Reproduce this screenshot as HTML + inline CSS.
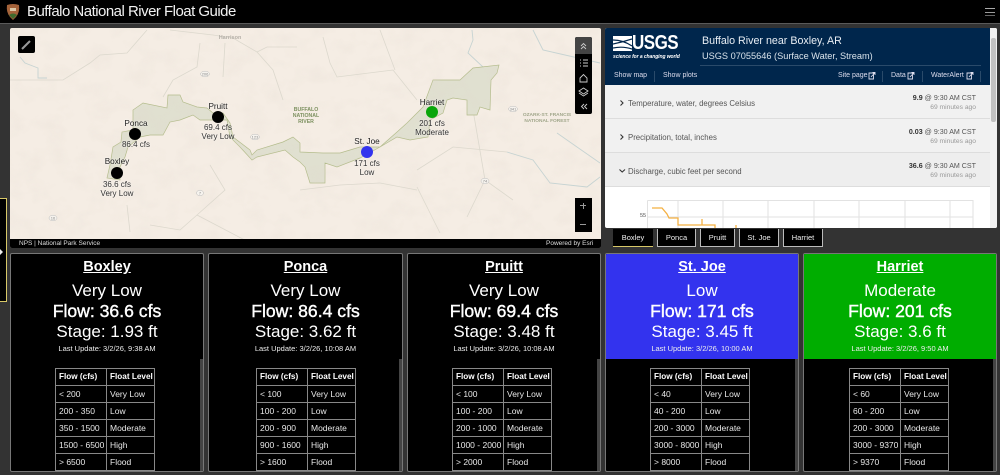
<!DOCTYPE html>
<html><head><meta charset="utf-8"><style>
html,body{margin:0;padding:0;width:1000px;height:475px;overflow:hidden;background:#333;font-family:"Liberation Sans",sans-serif;color:#fff}
body{filter:blur(.3px)}
div,span,a{position:absolute;white-space:nowrap}
.card{top:253px;height:219px;background:#000;border:1px solid #777;box-sizing:border-box;overflow:hidden;border-radius:2px}
.top{left:0;right:0;top:0;height:105px}
.c{left:0;width:100%;text-align:center}
.tt{top:4px;font-size:14.5px;font-weight:bold;text-decoration:underline;line-height:18px}
.l1{top:27px;font-size:17px;line-height:20px}
.l2{top:47px;font-size:17.6px;line-height:20px;-webkit-text-stroke:.4px #fff}
.l3{top:68px;font-size:17px;line-height:20px}
.l4{top:90px;font-size:7.5px;line-height:10px;color:#eee}
table{position:absolute;top:114px;border-collapse:collapse;font-size:8.5px;color:#e8e8e8;table-layout:fixed;width:100px}
td{border:1px solid #888;height:16px;padding:0 0 0 3px;box-sizing:border-box;overflow:hidden;white-space:nowrap;line-height:16px}
td.a{width:51px} tr:first-child td{font-weight:bold;color:#fff;font-size:8.2px}
.sb{right:0;top:105px;bottom:0;width:3px;background:#444}
.tab{top:229px;height:18px;background:#000;border:1px solid #bbb;border-top:0;box-sizing:border-box;font-size:7.5px;line-height:17px;text-align:center;color:#eee}
.mt{font-size:8px;color:#333;text-align:center;line-height:9px;text-shadow:0 0 2px #fff}
.nm{font-size:8.2px;color:#222}
.dot{border-radius:50%;width:12px;height:12px;background:#000}
.row{left:0;width:385px;height:34px;background:#f1f1f1;border-bottom:1px solid #ddd;box-sizing:border-box}
.rl{left:23px;top:14px;font-size:7.8px;color:#555;line-height:10px}
.rr{right:14px;top:9px;font-size:7.1px;color:#555;line-height:8.6px;text-align:right}
.rr span{position:static;color:#999;font-size:6.7px}
.lk{top:43px;font-size:7px;color:#dde;line-height:9px}
.sp{top:43px;width:1px;height:11px;background:#2a4a6a}
.shield{font-family:"Liberation Sans",sans-serif;font-size:4px;fill:#888;text-anchor:middle}
</style></head><body>
<div style="left:0;top:0;width:1000px;height:23px;background:#000"></div>
<div style="left:0;top:23px;width:1000px;height:1px;background:#5a5a5a"></div>
<svg style="position:absolute;left:6px;top:3px" width="14" height="17" viewBox="0 0 14 17"><path d="M1 2 Q7 0 13 2 Q14 9 10 14 L7 17 L4 14 Q0 9 1 2Z" fill="#a5633a"/><path d="M3 12 Q7 9 11 12 L7 16Z" fill="#3f6b2e"/><rect x="4" y="5" width="6" height="3" fill="#dcc9a8"/></svg>
<div style="left:27px;top:3px;font-size:15px;line-height:17px;color:#f2f2f2;letter-spacing:-.52px">Buffalo National River Float Guide</div>
<div style="left:985px;top:8px;width:10px;height:1px;background:#aaa"></div>
<div style="left:985px;top:12px;width:10px;height:1px;background:#999"></div>
<div style="left:985px;top:15px;width:10px;height:1px;background:#666"></div>

<div style="left:0;top:198px;width:7px;height:104px;background:#000;border:1px solid #d8c868;border-left:0;box-sizing:border-box"></div>
<div style="left:0;top:249px;width:0;height:0;border-left:3px solid #eee;border-top:3px solid transparent;border-bottom:3px solid transparent"></div>

<!-- map -->
<svg style="position:absolute;left:10px;top:28px;border-radius:2px" width="591" height="220" viewBox="10 28 591 220">
<defs><filter id="t" x="0" y="0" width="100%" height="100%"><feTurbulence type="fractalNoise" baseFrequency=".045 .06" numOctaves="3" seed="4"/><feColorMatrix values="0 0 0 0 .76  0 0 0 0 .69  0 0 0 0 .62  1.6 0 0 0 -.72"/></filter>
<clipPath id="pk"><path d="M107 178 L110 165 L113 147 L121 142 L122 132 L133 130 L133 110 L143 103 L167 108 L168 95 L180 95 L183 102 L197 107 L207 108 L213 113 L223 113 L230 123 L233 137 L250 150 L252 155 L257 150 L283 142 L293 137 L300 143 L300 152 L323 153 L340 153 L360 147 L380 147 L397 132 L407 123 L423 107 L433 80 L460 80 L473 68 L499 65 L497 73 L491 80 L490 110 L480 107 L477 115 L467 115 L467 100 L453 98 L447 100 L443 113 L430 120 L428 137 L410 140 L397 137 L380 147 L360 158 L337 167 L325 163 L325 183 L310 183 L305 167 L300 162 L293 157 L285 150 L257 157 L252 160 L240 147 L230 137 L227 120 L213 120 L200 120 L193 115 L180 120 L170 122 L163 135 L150 135 L140 137 L128 147 L125 157 L120 167 L120 180Z"/></clipPath></defs>
<rect x="10" y="28" width="591" height="220" fill="#f5ede4"/>
<rect x="10" y="28" width="591" height="220" filter="url(#t)" opacity=".28"/>
<g fill="none" stroke="#dcd8cd" stroke-width=".8">
<path d="M10 80 L43 80 L63 80 L90 63 L100 55 L127 53 L147 30"/><path d="M170 30 L213 35 L233 38 L257 52 L267 47 L297 47"/><path d="M200 43 L197 67 L173 80 L163 97"/><path d="M225 43 L223 77"/><path d="M257 52 L273 70 L283 100"/>
<path d="M323 37 L330 63 L337 77 L393 70 L417 100"/><path d="M380 30 L395 70"/><path d="M417 187 L440 233"/><path d="M380 183 L417 190"/><path d="M417 170 L453 147 L507 152"/><path d="M467 217 L485 180 L513 200"/><path d="M473 110 L485 180"/>
<path d="M127 205 L130 232"/><path d="M210 165 L225 190 L197 215 L260 248"/><path d="M150 225 L180 230 L197 215"/><path d="M300 190 L340 185 L380 183"/>
</g>
<g fill="none" stroke="#c6d3d2" stroke-width=".9">
<path d="M20 57 L25 63 L38 68 L38 78 L47 78"/><path d="M472 30 L473 40 L468 53 L483 67"/><path d="M507 152 L533 160 L550 183 L587 187 L600 177"/><path d="M557 133 L577 147 L600 163"/><path d="M533 30 L543 50 L600 63"/>
</g>
<path d="M107 178 L110 165 L113 147 L121 142 L122 132 L133 130 L133 110 L143 103 L167 108 L168 95 L180 95 L183 102 L197 107 L207 108 L213 113 L223 113 L230 123 L233 137 L250 150 L252 155 L257 150 L283 142 L293 137 L300 143 L300 152 L323 153 L340 153 L360 147 L380 147 L397 132 L407 123 L423 107 L433 80 L460 80 L473 68 L499 65 L497 73 L491 80 L490 110 L480 107 L477 115 L467 115 L467 100 L453 98 L447 100 L443 113 L430 120 L428 137 L410 140 L397 137 L380 147 L360 158 L337 167 L325 163 L325 183 L310 183 L305 167 L300 162 L293 157 L285 150 L257 157 L252 160 L240 147 L230 137 L227 120 L213 120 L200 120 L193 115 L180 120 L170 122 L163 135 L150 135 L140 137 L128 147 L125 157 L120 167 L120 180Z" fill="#e0e0d0" stroke="#b4bc8c" stroke-width=".7"/>
<g clip-path="url(#pk)"><rect x="10" y="28" width="591" height="220" filter="url(#t)" opacity=".5"/></g>
<g font-family="Liberation Sans,sans-serif" font-size="5.2" font-weight="bold" text-anchor="middle" fill="#7d9160"><text x="306" y="111">BUFFALO</text><text x="306" y="117">NATIONAL</text><text x="306" y="123">RIVER</text></g>
<g font-family="Liberation Sans,sans-serif" font-size="4.8" font-weight="bold" text-anchor="middle" fill="#a0a68a"><text x="547" y="116">OZARK-ST. FRANCIS</text><text x="547" y="122">NATIONAL FOREST</text></g>
<text x="230" y="39" font-family="Liberation Sans,sans-serif" font-size="5.5" font-weight="bold" text-anchor="middle" fill="#b5b0a8">Harrison</text>
<g fill="#f6f3ee" stroke="#bbb" stroke-width=".5"><ellipse cx="205" cy="74" rx="4.5" ry="2.8"/><ellipse cx="255" cy="137" rx="4.5" ry="2.8"/><ellipse cx="200" cy="193" rx="3.5" ry="2.8"/><ellipse cx="53" cy="218" rx="4" ry="2.8"/><ellipse cx="513" cy="109" rx="4.5" ry="2.8"/><ellipse cx="485" cy="181" rx="4" ry="2.8"/></g>
<g class="shield"><text x="205" y="75.5">206</text><text x="255" y="138.5">123</text><text x="200" y="194.5">7</text><text x="53" y="219.5">16</text><text x="513" y="110.5">341</text><text x="485" y="182.5">74</text></g>
<rect x="10" y="239" width="591" height="9" fill="#000"/>
</svg>
<div style="left:19px;top:238.5px;font-size:6.5px;line-height:9px;color:#ddd">NPS | National Park Service</div>
<div style="left:546px;top:238.5px;font-size:6.5px;line-height:9px;color:#ddd">Powered by Esri</div>
<div style="left:18px;top:36px;width:17px;height:17px;background:#000;border-radius:2px"></div>
<svg style="position:absolute;left:18px;top:36px" width="17" height="17"><path d="M4 13 L12 5" stroke="#999" stroke-width="2"/></svg>

<div class="dot" style="left:111px;top:167px"></div>
<div class="dot" style="left:129px;top:128px"></div>
<div class="dot" style="left:212px;top:111px"></div>
<div class="dot" style="left:361px;top:146px;background:#3333ee"></div>
<div class="dot" style="left:426px;top:106px;background:#0aa60a"></div>
<div class="mt nm" style="left:97px;top:157px;width:40px">Boxley</div>
<div class="mt" style="left:97px;top:180px;width:40px">36.6 cfs<br>Very Low</div>
<div class="mt nm" style="left:116px;top:119px;width:40px">Ponca</div>
<div class="mt" style="left:116px;top:140px;width:40px">86.4 cfs</div>
<div class="mt nm" style="left:198px;top:102px;width:40px">Pruitt</div>
<div class="mt" style="left:198px;top:123px;width:40px">69.4 cfs<br>Very Low</div>
<div class="mt nm" style="left:347px;top:137px;width:40px">St. Joe</div>
<div class="mt" style="left:347px;top:159px;width:40px">171 cfs<br>Low</div>
<div class="mt nm" style="left:412px;top:98px;width:40px">Harriet</div>
<div class="mt" style="left:412px;top:119px;width:40px">201 cfs<br>Moderate</div>

<div style="left:575px;top:37px;width:17px;height:77px;background:#000;border-radius:2px"></div>
<div style="left:575px;top:37px;width:17px;height:17px;background:#444;border-radius:2px 2px 0 0"></div>
<svg style="position:absolute;left:575px;top:37px" width="17" height="77" fill="none" stroke="#ccc" stroke-width=".9"><path d="M6 9 L8.5 6.5 L11 9 M6 12 L8.5 9.5 L11 12"/><path d="M5 23 H6 M5 26 H6 M5 29 H6 M8 23 H13 M8 26 H13 M8 29 H13"/><path d="M5 41 L8.5 37.5 L12 41 V45 H5Z"/><path d="M8.5 51 L13 54 L8.5 57 L4 54Z M4 56 L8.5 59 L13 56"/><path d="M9 67 L6.5 69.5 L9 72 M12 67 L9.5 69.5 L12 72"/></svg>
<div style="left:575px;top:198px;width:17px;height:34px;background:#000"></div>
<div style="left:580px;top:205px;width:6px;height:1px;background:#999"></div>
<div style="left:582.5px;top:202.5px;width:1px;height:6px;background:#999"></div>
<div style="left:580px;top:224px;width:6px;height:1px;background:#999"></div>

<!-- usgs panel -->
<div style="left:605px;top:28px;width:392px;height:200px;background:#fff;overflow:hidden;border-radius:2px">
 <div style="left:0;top:0;width:385px;height:57px;background:#00264c"></div>
 <svg style="position:absolute;left:8px;top:8px" width="19" height="15"><rect width="19" height="15" fill="#fff"/><path d="M0 4 Q10 4 19 10 M0 8 Q10 6 19 3 M0 12 Q10 10 19 13" stroke="#00264c" stroke-width="1.2" fill="none"/></svg>
 <div style="left:27px;top:5px;font-size:20px;font-weight:bold;line-height:20px;letter-spacing:-.6px;transform:scaleX(.85);transform-origin:0 0">USGS</div>
 <div style="left:8px;top:26px;font-size:5px;font-style:italic;font-weight:bold;line-height:7px;letter-spacing:-.08px">science for a changing world</div>
 <div style="left:97px;top:6.5px;font-size:10.7px;line-height:13px;color:#e8eef4">Buffalo River near Boxley, AR</div>
 <div style="left:97px;top:22px;font-size:9.2px;line-height:12px;color:#d8e2ea">USGS 07055646 (Surface Water, Stream)</div>
 <div style="left:95px;top:37px;width:281px;height:1px;background:#2a4a6a"></div>
 <div class="lk" style="left:9px">Show map</div>
 <div class="sp" style="left:49px"></div>
 <div class="lk" style="left:58px">Show plots</div>
 <div class="lk" style="left:233px">Site page</div>
 <div class="sp" style="left:277px"></div>
 <div class="lk" style="left:286px">Data</div>
 <div class="sp" style="left:317px"></div>
 <div class="lk" style="left:326px">WaterAlert</div>
 <div class="sp" style="left:375px"></div>
 <svg style="position:absolute;left:0;top:0" width="385" height="57" fill="none" stroke="#dde" stroke-width=".9"><path d="M264 45 H268.5 V51 H264 V46Z M266 49 L270 44.5 M267.5 44.5 H270 V47"/><path d="M303 45 H307.5 V51 H303 V46Z M305 49 L309 44.5 M306.5 44.5 H309 V47"/><path d="M362 45 H366.5 V51 H362 V46Z M364 49 L368 44.5 M365.5 44.5 H368 V47"/></svg>
 <div class="row" style="top:57px"><svg style="position:absolute;left:14px;top:15px" width="6" height="6" fill="none" stroke="#333" stroke-width="1.1"><path d="M1.5 .5 L4 3 L1.5 5.5"/></svg><div class="rl">Temperature, water, degrees Celsius</div><div class="rr"><b style="color:#333">9.9</b> @ 9:30 AM CST<br><span>69 minutes ago</span></div></div>
 <div class="row" style="top:91px"><svg style="position:absolute;left:14px;top:15px" width="6" height="6" fill="none" stroke="#333" stroke-width="1.1"><path d="M1.5 .5 L4 3 L1.5 5.5"/></svg><div class="rl">Precipitation, total, inches</div><div class="rr"><b style="color:#333">0.03</b> @ 9:30 AM CST<br><span>69 minutes ago</span></div></div>
 <div class="row" style="top:125px;background:#eee"><svg style="position:absolute;left:14px;top:15px" width="7" height="6" fill="none" stroke="#333" stroke-width="1.1"><path d="M.5 1.5 L3.2 4 L6 1.5"/></svg><div class="rl">Discharge, cubic feet per second</div><div class="rr"><b style="color:#333">36.6</b> @ 9:30 AM CST<br><span>69 minutes ago</span></div></div>
 <div style="left:385px;top:0;width:7px;height:200px;background:#f1f1f1"></div>
 <div style="left:386px;top:10px;width:5px;height:84px;background:#c1c1c1;border-radius:2px"></div>
 <svg style="position:absolute;left:42px;top:172px" width="330" height="28" fill="none"><path d="M.5 .5 H326 V28 M.5 .5 V28 M31 0 V28 M76 0 V28 M121 0 V28 M167 0 V28 M212 0 V28 M258 0 V28 M303 0 V28 M0 17 H326" stroke="#e2e2e2"/><path d="M5 8 H15 L20 14 L22 18 H31 V25 H55 V19 V25 H68 V28 M89 28 V25" stroke="#f4b042" stroke-width="1.3"/></svg>
 <div style="left:35px;top:185px;font-size:5.5px;line-height:7px;color:#555">55</div>
</div>

<div class="tab" style="left:613px;width:40px;border-color:#d8c868;border-width:0 0 1px 0">Boxley</div>
<div class="tab" style="left:657px;width:39px">Ponca</div>
<div class="tab" style="left:700px;width:35px">Pruitt</div>
<div class="tab" style="left:739px;width:40px">St. Joe</div>
<div class="tab" style="left:783px;width:40px">Harriet</div>

<!-- cards -->
<div class="card" style="left:10px;width:194px">
<div class="c tt">Boxley</div><div class="c l1">Very Low</div><div class="c l2">Flow: 36.6 cfs</div><div class="c l3">Stage: 1.93 ft</div><div class="c l4">Last Update: 3/2/26, 9:38 AM</div>
<table style="left:44px"><tr><td class="a">Flow (cfs)</td><td>Float Level</td></tr><tr><td>&lt; 200</td><td>Very Low</td></tr><tr><td>200 - 350</td><td>Low</td></tr><tr><td>350 - 1500</td><td>Moderate</td></tr><tr><td>1500 - 6500</td><td>High</td></tr><tr><td>&gt; 6500</td><td>Flood</td></tr></table><div class="sb"></div></div>

<div class="card" style="left:208px;width:195px">
<div class="c tt">Ponca</div><div class="c l1">Very Low</div><div class="c l2">Flow: 86.4 cfs</div><div class="c l3">Stage: 3.62 ft</div><div class="c l4">Last Update: 3/2/26, 10:08 AM</div>
<table style="left:47px"><tr><td class="a">Flow (cfs)</td><td>Float Level</td></tr><tr><td>&lt; 100</td><td>Very Low</td></tr><tr><td>100 - 200</td><td>Low</td></tr><tr><td>200 - 900</td><td>Moderate</td></tr><tr><td>900 - 1600</td><td>High</td></tr><tr><td>&gt; 1600</td><td>Flood</td></tr></table><div class="sb"></div></div>

<div class="card" style="left:407px;width:194px">
<div class="c tt">Pruitt</div><div class="c l1">Very Low</div><div class="c l2">Flow: 69.4 cfs</div><div class="c l3">Stage: 3.48 ft</div><div class="c l4">Last Update: 3/2/26, 10:08 AM</div>
<table style="left:44px"><tr><td class="a">Flow (cfs)</td><td>Float Level</td></tr><tr><td>&lt; 100</td><td>Very Low</td></tr><tr><td>100 - 200</td><td>Low</td></tr><tr><td>200 - 1000</td><td>Moderate</td></tr><tr><td>1000 - 2000</td><td>High</td></tr><tr><td>&gt; 2000</td><td>Flood</td></tr></table><div class="sb"></div></div>

<div class="card" style="left:605px;width:194px">
<div class="top" style="background:#3333ee"></div>
<div class="c tt">St. Joe</div><div class="c l1">Low</div><div class="c l2">Flow: 171 cfs</div><div class="c l3">Stage: 3.45 ft</div><div class="c l4">Last Update: 3/2/26, 10:00 AM</div>
<table style="left:44px"><tr><td class="a">Flow (cfs)</td><td>Float Level</td></tr><tr><td>&lt; 40</td><td>Very Low</td></tr><tr><td>40 - 200</td><td>Low</td></tr><tr><td>200 - 3000</td><td>Moderate</td></tr><tr><td>3000 - 8000</td><td>High</td></tr><tr><td>&gt; 8000</td><td>Flood</td></tr></table><div class="sb"></div></div>

<div class="card" style="left:803px;width:194px">
<div class="top" style="background:#00ad00"></div>
<div class="c tt">Harriet</div><div class="c l1">Moderate</div><div class="c l2">Flow: 201 cfs</div><div class="c l3">Stage: 3.6 ft</div><div class="c l4">Last Update: 3/2/26, 9:50 AM</div>
<table style="left:45px"><tr><td class="a">Flow (cfs)</td><td>Float Level</td></tr><tr><td>&lt; 60</td><td>Very Low</td></tr><tr><td>60 - 200</td><td>Low</td></tr><tr><td>200 - 3000</td><td>Moderate</td></tr><tr><td>3000 - 9370</td><td>High</td></tr><tr><td>&gt; 9370</td><td>Flood</td></tr></table><div class="sb"></div></div>
</body></html>
